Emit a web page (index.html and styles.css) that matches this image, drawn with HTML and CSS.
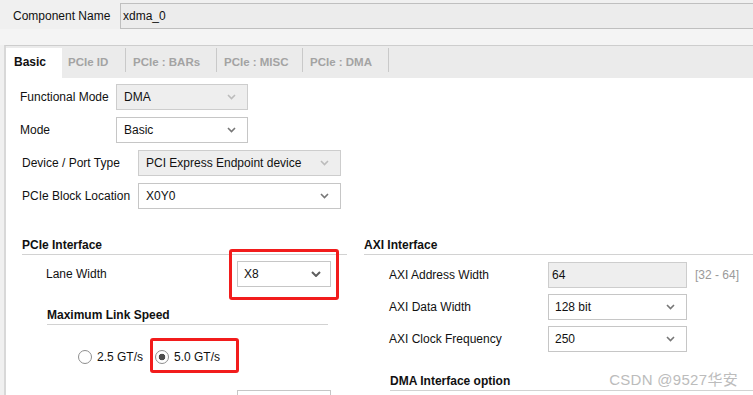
FILE: index.html
```html
<!DOCTYPE html>
<html lang="en">
<head>
    <meta charset="UTF-8">
    <meta name="viewport" content="width=device-width, initial-scale=1.0">
    <title>XDMA Customize IP</title>
    <link rel="stylesheet" href="styles.css">
</head>
<body>
    <!-- component name bar -->
    <div class="top">
        <span class="top-label">Component Name</span>
        <div class="name-field">xdma_0</div>
    </div>
    <div class="strip"></div>

    <!-- tabbed panel -->
    <div class="panel">
        <div class="tabs">
            <div class="tab active">Basic</div>
            <div class="tab tab-id">PCIe ID</div>
            <div class="tab tab-bars">PCIe : BARs</div>
            <div class="tab tab-misc">PCIe : MISC</div>
            <div class="tab tab-dma">PCIe : DMA</div>
        </div>

        <div class="content">
            <div class="rows rows-a">
                <div class="row">
                    <span class="label">Functional Mode</span>
                    <div class="combo disabled">
                        <span>DMA</span>
                        <svg class="chev" width="9" height="6" viewBox="0 0 9 6"><polyline points="1,1 4.5,4.5 8,1"/></svg>
                    </div>
                </div>
                <div class="row">
                    <span class="label">Mode</span>
                    <div class="combo">
                        <span>Basic</span>
                        <svg class="chev" width="9" height="6" viewBox="0 0 9 6"><polyline points="1,1 4.5,4.5 8,1"/></svg>
                    </div>
                </div>
            </div>

            <div class="rows rows-b">
                <div class="row">
                    <span class="label">Device / Port Type</span>
                    <div class="combo disabled">
                        <span>PCI Express Endpoint device</span>
                        <svg class="chev" width="9" height="6" viewBox="0 0 9 6"><polyline points="1,1 4.5,4.5 8,1"/></svg>
                    </div>
                </div>
                <div class="row">
                    <span class="label">PCIe Block Location</span>
                    <div class="combo">
                        <span>X0Y0</span>
                        <svg class="chev" width="9" height="6" viewBox="0 0 9 6"><polyline points="1,1 4.5,4.5 8,1"/></svg>
                    </div>
                </div>
            </div>

            <div class="columns">
                <!-- PCIe side -->
                <div class="col col-left">
                    <div class="section-title">PCIe Interface</div>
                    <div class="row lane-row">
                        <span class="label">Lane Width</span>
                        <div class="highlight hl-lane">
                            <div class="combo combo-lane">
                                <span>X8</span>
                                <svg class="chev chev-dark" width="10" height="6" viewBox="0 0 10 6"><polyline points="1,1 5,5 9,1"/></svg>
                            </div>
                        </div>
                    </div>

                    <div class="sub">
                        <div class="section-title">Maximum Link Speed</div>
                        <div class="radios">
                            <span class="radio"><span class="dot"></span>2.5 GT/s</span>
                            <span class="radio highlight hl-radio"><span class="dot checked"></span>5.0 GT/s</span>
                        </div>
                    </div>

                    <!-- next row, only its top edge is in view -->
                    <div class="row ref-row">
                        <span class="label"></span>
                        <div class="combo combo-lane"></div>
                    </div>
                </div>

                <!-- AXI side -->
                <div class="col col-right">
                    <div class="section-title">AXI Interface</div>
                    <div class="axi-rows">
                        <div class="row">
                            <span class="label">AXI Address Width</span>
                            <div class="text-field disabled">64</div>
                            <span class="range">[32 - 64]</span>
                        </div>
                        <div class="row">
                            <span class="label">AXI Data Width</span>
                            <div class="combo combo-axi">
                                <span>128 bit</span>
                                <svg class="chev" width="9" height="6" viewBox="0 0 9 6"><polyline points="1,1 4.5,4.5 8,1"/></svg>
                            </div>
                        </div>
                        <div class="row">
                            <span class="label">AXI Clock Frequency</span>
                            <div class="combo combo-axi">
                                <span>250</span>
                                <svg class="chev" width="9" height="6" viewBox="0 0 9 6"><polyline points="1,1 4.5,4.5 8,1"/></svg>
                            </div>
                        </div>
                    </div>
                    <div class="section-title dma-title">DMA Interface option</div>
                </div>
            </div>
        </div>
    </div>

    <div class="watermark">CSDN @9527华安</div>
</body>
</html>
```

FILE: styles.css
```css
body {
    margin: 0;
    height: 395px;
    overflow: hidden;
    position: relative;
    background-color: #f0f0f0;
    font-family: "Liberation Sans", Arial, sans-serif;
    font-size: 12px;
    color: #111;
}

/* component name bar */
.top {
    display: flex;
    align-items: center;
    padding: 3px 0 0 13px;
    height: 26px;
}
.top-label {
    width: 107px;
    flex-shrink: 0;
}
.name-field {
    flex: 1;
    height: 24px;
    line-height: 24px;
    padding-left: 2px;
    margin-right: -10px;
    background-color: #ececec;
    border: 1px solid #bfbfbf;
}
.strip {
    height: 16px;
    background-color: #f4f4f4;
}

/* panel and tabs */
.panel {
    margin-left: 4px;
    height: 349px;
    overflow: hidden;
    border-left: 2px solid #d8d8d8;
    border-top: 1px solid #cdcdcd;
    background-color: #fff;
}
.tabs {
    display: flex;
    align-items: flex-start;
    height: 30px;
    padding-top: 2px;
    background-color: #ebebeb;
}
.tab {
    box-sizing: border-box;
    height: 24px;
    padding: 6px 0 0 7px;
    line-height: 16px;
    font-size: 11.5px;
    font-weight: bold;
    color: #a3a3a3;
    border-right: 1px solid #c9c9c9;
}
.tab.active {
    width: 56px;
    height: 30px;
    padding-left: 8px;
    font-size: 12px;
    color: #111;
    background-color: #fff;
    border-right: none;
}
.tab-id { width: 64px; padding-left: 6px; }
.tab-bars { width: 91px; }
.tab-misc { width: 86px; }
.tab-dma { width: 86px; }

.content {
    padding: 6px 0 0 14px;
}

/* form rows */
.rows {
    display: flex;
    flex-direction: column;
    gap: 7px;
}
.row {
    display: flex;
    align-items: center;
    height: 26px;
}
.label {
    flex-shrink: 0;
    white-space: nowrap;
}
.rows-a .label { width: 96px; }
.rows-a .combo { width: 132px; }
.rows-b {
    margin-top: 7px;
    padding-left: 2px;
}
.rows-b .label { width: 116px; }
.rows-b .combo { width: 203px; }

.combo, .text-field {
    box-sizing: border-box;
    height: 26px;
    display: flex;
    align-items: center;
    justify-content: space-between;
    padding: 0 11px 0 7px;
    background-color: #fff;
    border: 1px solid #c6c6c6;
}
.combo.disabled, .text-field.disabled {
    background-color: #eeeeee;
    border-color: #cdcdcd;
}
.chev polyline {
    fill: none;
    stroke: #777;
    stroke-width: 1.6;
}
.disabled .chev polyline {
    stroke: #bcbcbc;
}
.chev-dark polyline {
    stroke: #5e5e5e;
    stroke-width: 2;
}

/* two column area */
.columns {
    display: flex;
    margin-top: 28px;
    padding-left: 2px;
}
.col-left {
    width: 325px;
    flex-shrink: 0;
}
.col-right {
    flex: 1;
    margin-left: 17px;
    margin-right: -10px;
}
.section-title {
    font-weight: bold;
    line-height: 16px;
    padding-bottom: 1px;
    border-bottom: 1px solid #d2d2d2;
}

.lane-row {
    margin-top: 6px;
}
.lane-row .label, .ref-row .label {
    box-sizing: border-box;
    width: 215px;
    padding-left: 24px;
}
.combo-lane {
    width: 94px;
    padding-left: 6px;
    padding-right: 9px;
}

.sub {
    width: 281px;
    margin: 20px 0 0 25px;
}
.radios {
    display: flex;
    align-items: center;
    gap: 12px;
    margin-top: 24px;
    padding-left: 31px;
    line-height: 16px;
}
.radio {
    display: flex;
    align-items: center;
    gap: 5px;
}
.dot {
    box-sizing: border-box;
    width: 14px;
    height: 14px;
    border: 1px solid #8e8e8e;
    border-radius: 50%;
    background-color: #fff;
}
.dot.checked {
    background: radial-gradient(circle, #4d4d4d 0 3px, #fff 3.6px);
}

.ref-row {
    margin-top: 25px;
}

/* annotation boxes */
.highlight {
    position: relative;
}
.highlight::after {
    content: "";
    position: absolute;
    border: 3px solid #f21c1c;
    border-radius: 3px;
    pointer-events: none;
}
.hl-lane::after {
    inset: -12px -8px -13px -8px;
}
.hl-radio::after {
    inset: -11px -19px -8px -5px;
}

/* AXI side */
.axi-rows {
    display: flex;
    flex-direction: column;
    gap: 6px;
    margin-top: 7px;
}
.axi-rows .label {
    box-sizing: border-box;
    width: 184px;
    padding-left: 25px;
}
.text-field {
    width: 139px;
    padding-left: 3px;
}
.combo-axi {
    width: 139px;
    padding-left: 6px;
}
.range {
    margin-left: 8px;
    color: #9a9a9a;
}
.dma-title {
    margin: 21px 0 0 26px;
}

.watermark {
    position: absolute;
    right: 15px;
    top: 368px;
    font-size: 15px;
    color: #bcbcbc;
    letter-spacing: 0.3px;
    font-family: "Liberation Sans", "Noto Sans CJK SC", sans-serif;
}
```
